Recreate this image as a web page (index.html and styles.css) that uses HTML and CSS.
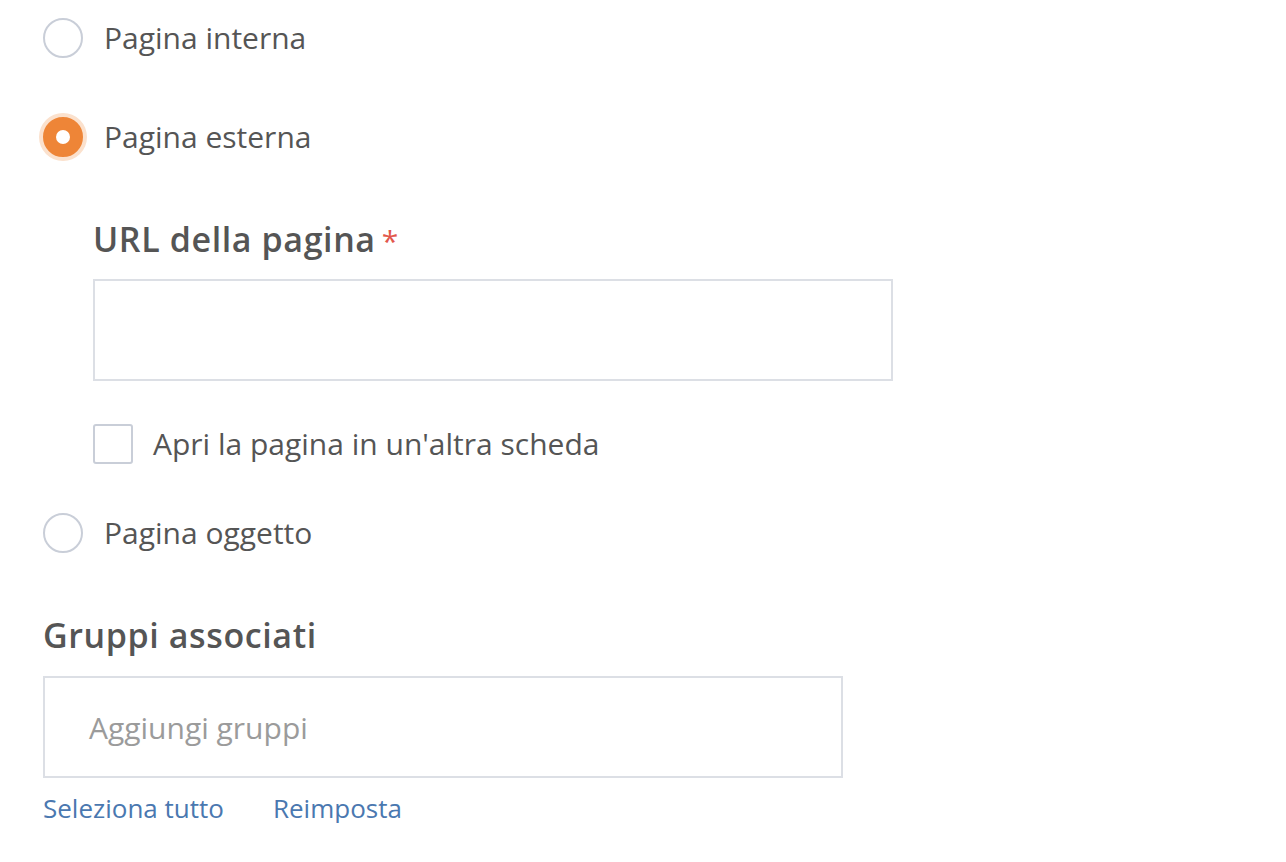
FILE: index.html
```html
<!DOCTYPE html>
<html lang="it">
<head>
<meta charset="utf-8">
<title>Form</title>
<link rel="stylesheet" href="styles.css">
</head>
<body>
<div class="form">
  <div class="radio-row">
    <span class="radio"></span>
    <span class="opt-label">Pagina interna</span>
  </div>
  <div class="radio-row second">
    <span class="radio checked"><span class="dot"></span></span>
    <span class="opt-label">Pagina esterna</span>
  </div>
  <div class="nested">
    <div class="field-label">URL della pagina<span class="req">*</span></div>
    <div class="input url-input"></div>
    <div class="check-row">
      <span class="checkbox"></span>
      <span class="opt-label">Apri la pagina in un'altra scheda</span>
    </div>
  </div>
  <div class="radio-row third">
    <span class="radio"></span>
    <span class="opt-label">Pagina oggetto</span>
  </div>
  <div class="field-label group-label">Gruppi associati</div>
  <div class="input groups-input"><span class="placeholder">Aggiungi gruppi</span></div>
  <div class="links">
    <a class="link">Seleziona tutto</a>
    <a class="link">Reimposta</a>
  </div>
</div>
</body>
</html>
```
FILE: styles.css
```css
html, body {
  margin: 0;
  padding: 0;
  background: #ffffff;
}
body {
  font-family: "Open Sans", "Noto Sans", sans-serif;
  color: #555555;
}
.form {
  padding: 18px 0 0 43px;
  display: flex;
  flex-direction: column;
}
.radio-row {
  display: flex;
  align-items: center;
  gap: 21px;
  height: 40px;
}
.radio-row.second {
  margin-top: 59px;
}
.radio-row.third {
  margin-top: 49px;
}
.radio {
  width: 36px;
  height: 36px;
  border: 2px solid #c9ced8;
  border-radius: 50%;
  box-sizing: content-box;
  flex: none;
  display: flex;
  align-items: center;
  justify-content: center;
}
.radio.checked {
  background: #ee8537;
  border-color: #ee8537;
  box-shadow: 0 0 0 4px #fbe1cd;
}
.dot {
  width: 14px;
  height: 14px;
  border-radius: 50%;
  background: #ffffff;
}
.opt-label {
  font-size: 30px;
  color: #555555;
  line-height: 40px;
}
.nested {
  padding-left: 50px;
  margin-top: 62px;
  display: flex;
  flex-direction: column;
}
.field-label {
  font-size: 34px;
  font-weight: 600;
  color: #555555;
  height: 40px;
  line-height: 40px;
  letter-spacing: 0.6px;
}
.req {
  color: #e2574c;
  margin-left: 6px;
  font-weight: 400;
  font-size: 30px;
}
.input {
  width: 796px;
  height: 98px;
  border: 2px solid #dcdfe5;
  box-sizing: content-box;
}
.url-input {
  margin-top: 20px;
}
.check-row {
  display: flex;
  align-items: center;
  gap: 20px;
  margin-top: 43px;
  height: 40px;
}
.checkbox {
  width: 36px;
  height: 36px;
  border: 2px solid #c9ced8;
  border-radius: 3px;
  flex: none;
}
.group-label {
  margin-top: 62px;
}
.groups-input {
  margin-top: 21px;
  display: flex;
  align-items: center;
}
.placeholder {
  font-size: 30px;
  color: #9b9b9b;
  margin-left: 44px;
}
.links {
  display: flex;
  gap: 49px;
  margin-top: 15px;
}
.link {
  font-size: 26px;
  line-height: 30px;
  color: #4a78b0;
  text-decoration: none;
}
```
